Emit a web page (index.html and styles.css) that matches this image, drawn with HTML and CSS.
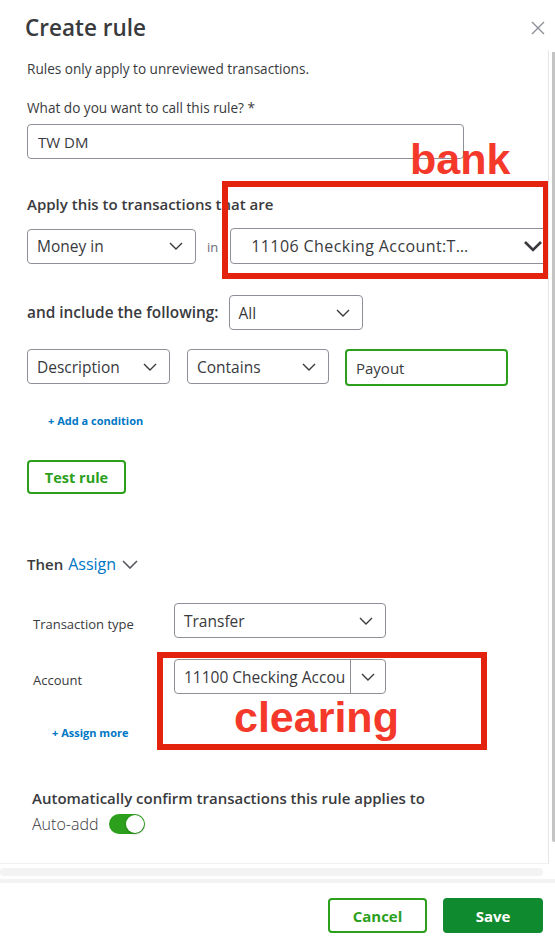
FILE: index.html
```html
<!DOCTYPE html>
<html lang="en">
<head>
  <meta charset="UTF-8" />
  <meta name="viewport" content="width=device-width, initial-scale=1.0" />
  <title>Create rule</title>
  <link rel="stylesheet" href="styles.css">
</head>
<body>
  <div class="dialog">
    <div class="header">
      <h2>Create rule</h2>
      <button class="close" aria-label="Close">
        <svg width="14" height="14" viewBox="0 0 14 14"><path d="M1 1L13 13M13 1L1 13" stroke="#8d9096" stroke-width="1.4" fill="none"/></svg>
      </button>
    </div>

    <div class="body">
      <div class="content">
        <p class="note">Rules only apply to unreviewed transactions.</p>

        <label class="field-label" for="ruleName">What do you want to call this rule? *</label>
        <input class="text-input name-input" id="ruleName" type="text" value="TW DM" />

        <h3 class="section-title">Apply this to transactions that are</h3>
        <div class="row apply-row">
          <div class="select money-select">
            <span>Money in</span>
            <svg class="chev" width="14" height="8" viewBox="0 0 14 8"><path d="M1 1L7 7L13 1" stroke="#393a3d" stroke-width="1.4" fill="none"/></svg>
          </div>
          <span class="in">in</span>
          <div class="select bank-select">
            <span>11106 Checking Account:T…</span>
            <svg class="chev" width="20" height="12" viewBox="0 0 20 12"><path d="M2 2L10 10L18 2" stroke="#393a3d" stroke-width="2.6" fill="none"/></svg>
          </div>
        </div>

        <div class="row include-row">
          <h3 class="section-title inline">and include the following:</h3>
          <div class="select all-select">
            <span>All</span>
            <svg class="chev" width="14" height="8" viewBox="0 0 14 8"><path d="M1 1L7 7L13 1" stroke="#393a3d" stroke-width="1.4" fill="none"/></svg>
          </div>
        </div>

        <div class="row condition-row">
          <div class="select desc-select">
            <span>Description</span>
            <svg class="chev" width="14" height="8" viewBox="0 0 14 8"><path d="M1 1L7 7L13 1" stroke="#393a3d" stroke-width="1.4" fill="none"/></svg>
          </div>
          <div class="select contains-select">
            <span>Contains</span>
            <svg class="chev" width="14" height="8" viewBox="0 0 14 8"><path d="M1 1L7 7L13 1" stroke="#393a3d" stroke-width="1.4" fill="none"/></svg>
          </div>
          <input class="text-input payout-input" type="text" value="Payout" />
        </div>

        <a class="link add-condition" href="#">+ Add a condition</a>

        <button class="btn-outline test-btn">Test rule</button>

        <div class="then">
          <span class="then-label">Then</span>
          <span class="then-action">Assign</span>
          <svg width="16" height="9" viewBox="0 0 16 9"><path d="M1 1L8 8L15 1" stroke="#55575d" stroke-width="1.6" fill="none"/></svg>
        </div>

        <div class="assign-row type-row">
          <span class="assign-label">Transaction type</span>
          <div class="select assign-select">
            <span>Transfer</span>
            <svg class="chev" width="14" height="8" viewBox="0 0 14 8"><path d="M1 1L7 7L13 1" stroke="#393a3d" stroke-width="1.4" fill="none"/></svg>
          </div>
        </div>

        <div class="assign-row account-row">
          <span class="assign-label">Account</span>
          <div class="select assign-select combo">
            <span class="combo-text">11100 Checking Accou</span>
            <span class="combo-btn">
              <svg width="14" height="8" viewBox="0 0 14 8"><path d="M1 1L7 7L13 1" stroke="#393a3d" stroke-width="1.4" fill="none"/></svg>
            </span>
          </div>
        </div>

        <a class="link assign-more" href="#">+ Assign more</a>

        <div class="auto">
          <h3 class="section-title">Automatically confirm transactions this rule applies to</h3>
          <div class="auto-row">
            <span class="auto-label">Auto-add</span>
            <span class="toggle"><span class="knob"></span></span>
          </div>
        </div>

        <!-- annotations drawn on top of the screenshot -->
        <div class="mark mark-bank"></div>
        <span class="mark-text text-bank">bank</span>
        <div class="mark mark-clearing"></div>
        <span class="mark-text text-clearing">clearing</span>
      </div>
      <div class="scrollbar"><div class="thumb"></div></div>
    </div>

    <div class="hscroll"></div>

    <div class="footer">
      <button class="btn-outline">Cancel</button>
      <button class="btn-primary">Save</button>
    </div>
  </div>
</body>
</html>
```

FILE: styles.css
```css
* {
  box-sizing: border-box;
}
body {
  margin: 0;
  padding: 0;
  font-family: 'Open Sans', 'Lato', sans-serif;
  color: #393a3d;
  background: #fff;
}
.dialog {
  width: 555px;
  height: 951px;
  overflow: hidden;
}
.header {
  height: 50px;
  display: flex;
  justify-content: space-between;
  align-items: flex-start;
  padding: 13px 10px 0 25px;
}
.header h2 {
  margin: 0;
  font-size: 22.5px;
  font-weight: 600;
  line-height: 30px;
  color: #393a3d;
}
.close {
  border: none;
  background: none;
  padding: 8px 0 0;
  cursor: pointer;
}
.body {
  height: 814px;
  display: flex;
}
.content {
  position: relative;
  flex: 1;
  overflow: hidden;
  padding: 10px 0 0 27px;
  border-right: 1px solid #e6e6e6;
  border-bottom: 1px solid #f1f1f1;
}
.scrollbar {
  width: 6px;
  padding: 2px 0 0 3px;
}
.thumb {
  width: 4px;
  height: 790px;
  background: #c4c4c4;
  border-radius: 0 0 2px 2px;
}
.note {
  margin: 0;
  font-size: 13.6px;
  line-height: 18px;
}
.field-label {
  display: block;
  margin-top: 21px;
  font-size: 13.6px;
  line-height: 18px;
}
.text-input {
  font-family: inherit;
  font-size: 15px;
  color: #393a3d;
  height: 35px;
  padding: 0 10px;
  border: 1px solid #8d9096;
  border-radius: 4px;
  outline: none;
}
.name-input {
  display: block;
  width: 437px;
  margin-top: 7px;
}
.section-title {
  margin: 35px 0 0;
  font-size: 15px;
  font-weight: 600;
  line-height: 20px;
}
.section-title.inline {
  margin: 0 10px 0 0;
  font-size: 15.4px;
}
.row {
  display: flex;
  align-items: center;
}
.select {
  height: 35px;
  display: flex;
  align-items: center;
  justify-content: space-between;
  padding: 0 12px 0 9px;
  border: 1px solid #8d9096;
  border-radius: 4px;
  font-size: 15.5px;
  white-space: nowrap;
  background: #fff;
  flex-shrink: 0;
}
.apply-row {
  margin-top: 14px;
}
.money-select {
  width: 169px;
}
.in {
  font-size: 13px;
  color: #6b6c72;
  margin: 2px 12px 0 11px;
}
.bank-select {
  width: 340px;
  padding: 0 26px 0 20px;
  height: 36px;
  font-size: 16px;
  letter-spacing: 0.4px;
}
.include-row {
  margin-top: 31px;
}
.all-select {
  width: 134px;
}
.condition-row {
  margin-top: 19px;
  align-items: flex-start;
}
.desc-select {
  width: 143px;
  margin-right: 17px;
}
.contains-select {
  width: 142px;
  margin-right: 16px;
}
.payout-input {
  width: 163px;
  height: 37px;
  border: 2px solid #2ca01c;
  padding: 0 9px;
}
.link {
  display: block;
  color: #0077c5;
  font-size: 11px;
  font-weight: 700;
  line-height: 16px;
  text-decoration: none;
}
.add-condition {
  margin: 27px 0 0 21px;
}
.btn-outline,
.btn-primary {
  font-family: inherit;
  font-size: 15px;
  font-weight: 700;
  width: 99px;
  height: 35px;
  border-radius: 4px;
  cursor: pointer;
}
.btn-outline {
  background: #fff;
  color: #2ca01c;
  border: 2px solid #2ca01c;
}
.btn-primary {
  background: #108a2e;
  color: #fff;
  border: none;
  width: 100px;
}
.test-btn {
  display: block;
  margin-top: 31px;
  height: 34px;
  font-size: 14.5px;
}
.then {
  display: flex;
  align-items: center;
  margin-top: 60px;
  line-height: 20px;
}
.then-label {
  font-size: 15px;
  font-weight: 600;
}
.then-action {
  font-size: 16px;
  color: #0077c5;
  margin: 0 6px 0 5px;
}
.assign-row {
  display: flex;
  align-items: center;
  padding-left: 6px;
}
.type-row {
  margin-top: 29px;
}
.account-row {
  margin-top: 21px;
}
.assign-label {
  width: 141px;
  font-size: 13px;
  padding-top: 6px;
}
.assign-select {
  width: 212px;
}
.combo {
  padding: 0;
  overflow: hidden;
}
.combo-text {
  flex: 1;
  overflow: hidden;
  padding-left: 9px;
}
.combo-btn {
  width: 35px;
  height: 100%;
  border-left: 1px solid #8d9096;
  display: flex;
  align-items: center;
  justify-content: center;
}
.assign-more {
  margin: 31px 0 0 25px;
}
.auto {
  padding-left: 5px;
}
.auto .section-title {
  margin-top: 47px;
}
.auto-row {
  display: flex;
  align-items: center;
  margin-top: 5px;
}
.auto-label {
  font-size: 16px;
  font-weight: 300;
  margin-right: 11px;
}
.toggle {
  position: relative;
  width: 36px;
  height: 20px;
  border-radius: 10px;
  background: #2ca01c;
}
.knob {
  position: absolute;
  top: 1px;
  right: 1px;
  width: 18px;
  height: 18px;
  border-radius: 50%;
  background: #fff;
  box-shadow: 0 1px 3px rgba(0, 0, 0, 0.25);
}
.hscroll {
  height: 8px;
  width: 543px;
  margin-top: 4px;
  background: #f3f3f3;
  border-radius: 4px;
}
.footer {
  margin-top: 3px;
  border-top: 4px solid #f2f3f5;
  display: flex;
  justify-content: flex-end;
  gap: 16px;
  padding: 15px 12px 0 0;
}

/* red annotation boxes */
.mark {
  position: absolute;
  border: 6px solid #e3230d;
}
.mark-bank {
  left: 222px;
  top: 131px;
  width: 327px;
  height: 98px;
}
.mark-clearing {
  left: 157px;
  top: 602px;
  width: 330px;
  height: 98px;
}
.mark-text {
  position: absolute;
  font-family: 'Liberation Sans', Arial, sans-serif;
  font-weight: 700;
  font-size: 43px;
  line-height: 1;
  color: #f4392b;
}
.text-bank {
  left: 410px;
  top: 88px;
}
.text-clearing {
  left: 234px;
  top: 646px;
}
```
